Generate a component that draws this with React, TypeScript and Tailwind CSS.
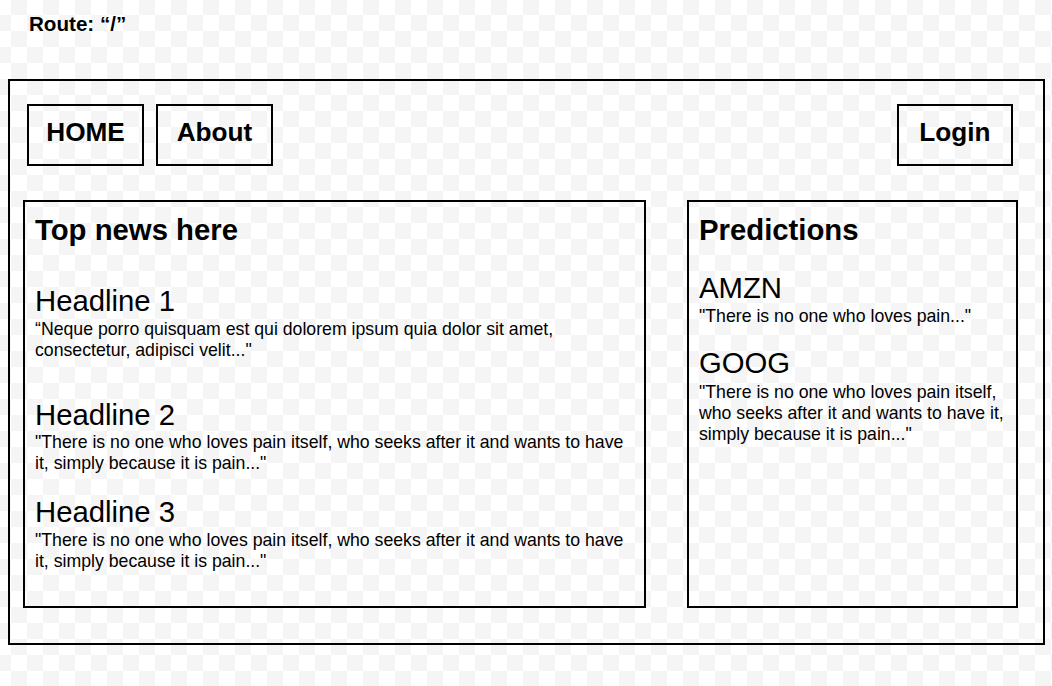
import React from "react";

const font = "font-['Liberation_Sans',Arial,sans-serif]";

function NavButton({ label, w }: { label: string; w: string }) {
  return (
    <div
      className={`${w} h-[62px] border-2 border-black flex items-center justify-center pb-[6px] text-[26.2px] font-bold text-black leading-[normal]`}
    >
      {label}
    </div>
  );
}

function Story({ title, body, mt, bodyMt }: { title: string; body: string; mt: string; bodyMt: string }) {
  return (
    <div className={mt}>
      <div className="text-[29.3px] leading-[normal]">{title}</div>
      <p className={`${bodyMt} text-[17.7px] leading-[normal]`}>{body}</p>
    </div>
  );
}

export default function App() {
  return (
    <div
      className={`${font} leading-[normal] min-h-screen w-full text-black bg-[image:repeating-conic-gradient(#f5f5f5_0%_25%,#ffffff_0%_50%)] bg-[length:32px_32px] bg-[position:-5px_-1px]`}
    >
      <div className="pl-[29px] pt-[12px] text-[20.6px] font-bold leading-[23px]">Route: “/”</div>
      <div className="ml-[8px] mt-[44px] w-[1037px] h-[566px] border-2 border-black">
        <div className="flex justify-between pt-[23px] pl-[17px] pr-[30px]">
          <div className="flex gap-[12px]">
            <NavButton label="HOME" w="w-[117px]" />
            <NavButton label="About" w="w-[117px]" />
          </div>
          <NavButton label="Login" w="w-[116px]" />
        </div>
        <div className="flex gap-[41px] mt-[34px] pl-[13px]">
          <div className="w-[623px] h-[408px] border-2 border-black px-[10px] pt-[11px]">
            <div className="text-[29.3px] font-bold leading-[normal]">Top news here</div>
            <Story
              mt="mt-[37px]"
              bodyMt="mt-[1px]"
              title="Headline 1"
              body={"“Neque porro quisquam est qui dolorem ipsum quia dolor sit amet, consectetur, adipisci velit...\""}
            />
            <Story
              mt="mt-[37px]"
              bodyMt="mt-0"
              title="Headline 2"
              body={"\"There is no one who loves pain itself, who seeks after it and wants to have it, simply because it is pain...\""}
            />
            <Story
              mt="mt-[21px]"
              bodyMt="mt-[1px]"
              title="Headline 3"
              body={"\"There is no one who loves pain itself, who seeks after it and wants to have it, simply because it is pain...\""}
            />
          </div>
          <div className="w-[331px] h-[408px] border-2 border-black px-[10px] pt-[11px]">
            <div className="text-[29.3px] font-bold leading-[normal]">Predictions</div>
            <Story
              mt="mt-[24px]"
              bodyMt="mt-[1px]"
              title="AMZN"
              body={"\"There is no one who loves pain...\""}
            />
            <Story
              mt="mt-[19px]"
              bodyMt="mt-[2px]"
              title="GOOG"
              body={"\"There is no one who loves pain itself, who seeks after it and wants to have it, simply because it is pain...\""}
            />
          </div>
        </div>
      </div>
    </div>
  );
}
